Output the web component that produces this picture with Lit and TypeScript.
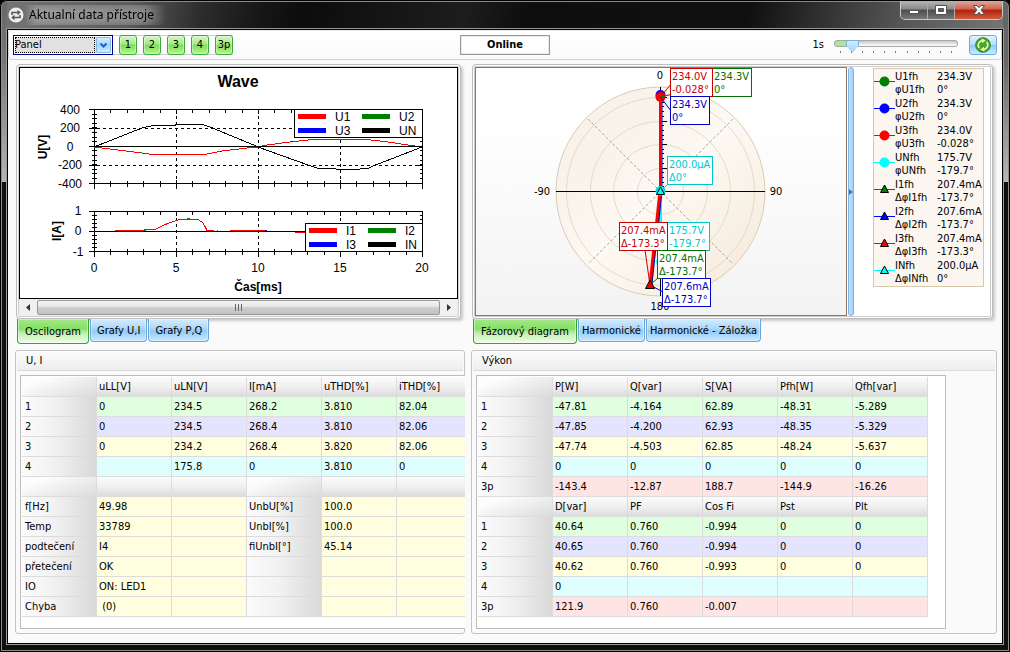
import { LitElement, html, svg, css } from "lit";
import { customElement, state } from "lit/decorators.js";
import { classMap } from "lit/directives/class-map.js";

const UI_FONT = css`"DejaVu Sans Condensed", "Noto Sans", sans-serif`;

type Row = { head: string; tone: string; cells: string[] };

const UI_ROWS: Row[] = [
  { head: "1", tone: "green", cells: ["0", "234.5", "268.2", "3.810", "82.04"] },
  { head: "2", tone: "violet", cells: ["0", "234.5", "268.4", "3.810", "82.06"] },
  { head: "3", tone: "yellow", cells: ["0", "234.2", "268.4", "3.820", "82.06"] },
  { head: "4", tone: "cyan", cells: ["", "175.8", "0", "3.810", "0"] },
];

const STATUS_ROWS: string[][] = [
  ["f[Hz]", "49.98", "UnbU[%]", "100.0"],
  ["Temp", "33789", "UnbI[%]", "100.0"],
  ["podtečení", "I4", "fiUnbI[°]", "45.14"],
  ["přetečení", "OK", "", ""],
  ["IO", "ON: LED1", "", ""],
  ["Chyba", " (0)", "", ""],
];

const POWER_BLOCKS: { heads: string[]; rows: Row[] }[] = [
  {
    heads: ["P[W]", "Q[var]", "S[VA]", "Pfh[W]", "Qfh[var]"],
    rows: [
      { head: "1", tone: "green", cells: ["-47.81", "-4.164", "62.89", "-48.31", "-5.289"] },
      { head: "2", tone: "violet", cells: ["-47.85", "-4.200", "62.93", "-48.35", "-5.329"] },
      { head: "3", tone: "yellow", cells: ["-47.74", "-4.503", "62.85", "-48.24", "-5.637"] },
      { head: "4", tone: "cyan", cells: ["0", "0", "0", "0", "0"] },
      { head: "3p", tone: "pink", cells: ["-143.4", "-12.87", "188.7", "-144.9", "-16.26"] },
    ],
  },
  {
    heads: ["D[var]", "PF", "Cos Fi", "Pst", "Plt"],
    rows: [
      { head: "1", tone: "green", cells: ["40.64", "0.760", "-0.994", "0", "0"] },
      { head: "2", tone: "violet", cells: ["40.65", "0.760", "-0.994", "0", "0"] },
      { head: "3", tone: "yellow", cells: ["40.62", "0.760", "-0.993", "0", "0"] },
      { head: "4", tone: "cyan", cells: ["0", "", "", "", ""] },
      { head: "3p", tone: "pink", cells: ["121.9", "0.760", "-0.007", "", ""] },
    ],
  },
];

@customElement("wave-chart")
class WaveChart extends LitElement {
  static styles = css`
    :host { display: block; }
    svg { display: block; width: 100%; height: auto; background: #fff; }
    text { font: 12px "Liberation Sans", Arial, sans-serif; fill: #000; }
    .mid { text-anchor: middle; }
    .bold { font-weight: bold; }
    .title { font-size: 16px; font-weight: bold; text-anchor: middle; }
    .line { fill: none; stroke: #000; stroke-width: 1; shape-rendering: crispEdges; }
    .dash { stroke-dasharray: 3 3; }
    .red { stroke: #f00; }
    .box { fill: #fff; }
  `;

  private axes(top: number, bottom: number, majors: number[], minorStep: number) {
    let d = `M94.5 ${top}H422.5V${bottom}H94.5Z`;
    for (let i = 0; i <= 20; i++) {
      const x = Math.round(94 + i * 16.4) + 0.5;
      const major = i % 5 === 0;
      d += `M${x} ${top}v${major ? 4 : 3}M${x} ${bottom + (major ? 5 : 3)}v${major ? -9 : -6}`;
    }
    for (let y = top; y < bottom - 1; y += minorStep) {
      d += `M92 ${Math.floor(y) + 0.5}h5M420 ${Math.floor(y) + 0.5}h3`;
    }
    for (const y of majors) d += `M89 ${y}h8M418 ${y}h4`;
    return svg`
      <path class="line" d=${d}></path>
      <path class="line dash" d=${`M176.5 ${top}V${bottom}M258.5 ${top}V${bottom}M340.5 ${top}V${bottom}`}></path>`;
  }

  private legend(x: number, y: number, second: number, names: string[]) {
    const fills = ["#f00", "#008000", "#00f", "#000"];
    return svg`
      <rect class="line box" x=${x + 0.5} y=${y + 0.5} width=${422 - x} height="28"></rect>
      ${names.map((n, i) => {
        const sx = x + 4 + (i % 2) * second;
        const sy = y + 5 + (i > 1 ? 14 : 0);
        return svg`<rect x=${sx} y=${sy} width="28" height="5" fill=${fills[i]}></rect>
          <text x=${sx + 37} y=${sy + 7}>${n}</text>`;
      })}`;
  }

  render() {
    return html`
      <svg viewBox="20 68 437 230" role="img" aria-label="Wave">
        <text class="title" x="238" y="87">Wave</text>
        ${this.axes(109.5, 183.5, [109.5, 128.5, 146.5, 165.5, 183.5], 4.6)}
        <path class="line dash" d="M97 128.5H420M97 165.5H420"></path>
        <polyline class="line red" points="94,147 115,149.6 140,152.7 153,154.5 205,154.5 222,151 250,147.7 258,147 265,145.3 290,142 313,139.5 367,139.5 383,141.3 415,146 422,147"></polyline>
        <path class="line" d="M94 146.5H422"></path>
        <polyline class="line" points="94,147 143,127.6 153,125.5 173,125.5 178,124.5 202,124.5 210,127 250,143.5 262,148.5 308,165 318,168.5 353,169.5 368,168.5 373,166 422,147"></polyline>
        <path stroke="#008000" d="M139 152.5h2"></path>
        <path stroke="#00f" d="M220 151.5h2M291 141.5h2"></path>
        ${this.legend(294, 109, 64, ["U1", "U2", "U3", "UN"])}
        ${["400", "200", "0", "-200", "-400"].map(
          (t, i) => svg`<text class="mid" x="70" y=${[114, 132, 151, 169, 188][i]}>${t}</text>`
        )}
        <text class="mid bold" transform="translate(47 147) rotate(-90)">U[V]</text>

        ${this.axes(211.5, 251.5, [211.5, 231.5, 251.5], 4)}
        <path class="line" d="M94 231.5H422"></path>
        <polyline class="line red" points="115,230.5 144,230.5 145,229.5 155,229.5 163,225.3 173,221.7 178,220 187,219.5 198,219.5 203,222.7 207,230.5 214,230.5"></polyline>
        <path class="line red" d="M230 230.5H265M295 232.5h11"></path>
        <path stroke="#008000" d="M187 218.5h3M144 230.5h2M217 230.5h1"></path>
        <path stroke="#00f" d="M265 230.5h2"></path>
        ${this.legend(305, 223, 59, ["I1", "I2", "I3", "IN"])}
        ${["1", "0", "-1"].map(
          (t, i) => svg`<text class="mid" x="78" y=${[215, 235, 256][i]}>${t}</text>`
        )}
        <text class="mid bold" transform="translate(61 231) rotate(-90)">I[A]</text>
        ${[0, 5, 10, 15, 20].map(
          (t, i) => svg`<text class="mid" x=${94 + i * 82} y="272">${t}</text>`
        )}
        <text class="mid bold" x="258" y="291">Čas[ms]</text>
      </svg>
    `;
  }
}

@customElement("phasor-chart")
class PhasorChart extends LitElement {
  static styles = css`
    :host { display: block; }
    svg { display: block; width: 100%; height: auto; }
    text { font: 11px ${UI_FONT}; fill: #000; }
    .mid { text-anchor: middle; }
    .ring { fill: none; stroke: #e6dac8; stroke-width: 1; }
    .axis { stroke: #000; stroke-width: 1; shape-rendering: crispEdges; }
    .diag { stroke: #a8a8a8; stroke-dasharray: 3 2; fill: none; }
    .box { fill: #fff; shape-rendering: crispEdges; }
  `;

  private tag(x: number, y: number, w: number, color: string, a: string, b: string) {
    return svg`
      <rect class="box" x=${x + 0.5} y=${y + 0.5} width=${w - 1} height="28" stroke=${color}></rect>
      <text x=${x + 2} y=${y + 12} style="fill:${color}">${a}</text>
      <text x=${x + 2} y=${y + 25} style="fill:${color}">${b}</text>`;
  }

  render() {
    let ticks = "";
    for (let i = 1; i <= 21; i++) {
      const y = Math.round(191 - i * 4.7) + 0.5;
      ticks += `M661 ${y}h${i % 5 === 0 ? 6 : 3}`;
    }
    return html`
      <svg viewBox="476 68 370 247" role="img" aria-label="Fázorový diagram">
        <defs>
          <linearGradient id="bg" x1="0" y1="0" x2="0" y2="1">
            <stop offset="0.2" stop-color="#fff"></stop>
            <stop offset="1" stop-color="#f3f3f3"></stop>
          </linearGradient>
          <linearGradient id="disc" x1="0" y1="0" x2="1" y2="1">
            <stop offset="0" stop-color="#faf1e8"></stop>
            <stop offset="0.3" stop-color="#f9f3eb"></stop>
            <stop offset="0.5" stop-color="#fdf9f3"></stop>
            <stop offset="1" stop-color="#f3e8d7"></stop>
          </linearGradient>
        </defs>
        <rect x="476" y="68" width="370" height="247" fill="url(#bg)"></rect>
        <circle cx="660.5" cy="191.5" r="104.5" fill="url(#disc)" stroke="#d9ccb5"></circle>
        ${[94, 70, 47, 23].map((r) => svg`<circle class="ring" cx="660.5" cy="191.5" r=${r}></circle>`)}
        <path class="diag" d="M588 119L733 264M733 119L588 264"></path>
        <path class="axis" d="M556 191.5H765M660.5 87V296"></path>
        <path class="axis" d=${ticks}></path>
        <text class="mid" x="660" y="79">0</text>
        <text class="mid" x="542" y="195">-90</text>
        <text class="mid" x="776" y="195">90</text>
        <text class="mid" x="660" y="310">180</text>

        <path d="M660.5 191V262" stroke="#0ff" stroke-width="3"></path>
        <circle cx="661" cy="262" r="5" fill="#0ff"></circle>
        <circle cx="660.5" cy="95" r="5" fill="#00f"></circle>
        <path d="M661 191V97" stroke="#00c" stroke-width="3"></path>
        <path d="M660.500 191V97" stroke="#f00" stroke-width="3"></path>
        <path d="M661 191L651 284" stroke="#00a" stroke-width="3"></path>
        <path d="M660 191L650 285" stroke="#f00" stroke-width="3"></path>
        <circle cx="660.5" cy="97" r="5" fill="#f00"></circle>
        <path d="M671 84L660.5 97" stroke="#d00"></path>
        <path d="M671 94.5L660.5 97" stroke="#007000"></path>
        <path d="M671 111L660.5 97" stroke="#00c"></path>
        <path d="M668 184L661 191" stroke="#0cc"></path>
        <path d="M645 250L650 285" stroke="#c00"></path>
        <path d="M658 278L650 285" stroke="#007000"></path>
        <path d="M663 292L650 285" stroke="#00c"></path>
        <path d="M645.5 288.5h9L650 280Z" fill="#e00" stroke="#000"></path>
        <circle cx="660.5" cy="191" r="5" fill="#0dd"></circle>
        <path d="M656.5 194.5h8L660.5 187Z" fill="#0ff" stroke="#000"></path>

        ${this.tag(712, 68, 40, "#007000", "234.3V", "0°")}
        ${this.tag(670, 68, 43, "#c80000", "234.0V", "-0.028°")}
        ${this.tag(670, 96, 40, "#0000c8", "234.3V", "0°")}
        ${this.tag(667, 156, 46, "#00c8c8", "200.0µA", "Δ0°")}
        ${this.tag(667, 222, 43, "#00c8c8", "175.7V", "-179.7°")}
        ${this.tag(619, 222, 49, "#c80000", "207.4mA", "Δ-173.3°")}
        ${this.tag(657, 250, 49, "#007000", "207.4mA", "Δ-173.7°")}
        ${this.tag(662, 278, 49, "#0000c8", "207.6mA", "Δ-173.7°")}
      </svg>
    `;
  }
}

@customElement("phasor-legend")
class PhasorLegend extends LitElement {
  static styles = css`
    :host { display: block; font: 11px/13px ${UI_FONT}; color: #000; }
    .list {
      list-style: none; margin: 0; padding: 0 0 1px;
      border: 1px solid #d8c7aa; background: #fbf6f0; white-space: nowrap;
    }
    .item { display: grid; grid-template-columns: 21px 42px 1fr; height: 27px; }
    .mark { display: block; width: 21px; height: 27px; }
    .cell { padding-top: 1px; }
  `;
  private items: [string, string, string, string, string, boolean][] = [
    ["U1fh", "φU1fh", "234.3V", "0°", "#008000", false],
    ["U2fh", "φU2fh", "234.3V", "0°", "#0000ff", false],
    ["U3fh", "φU3fh", "234.0V", "-0.028°", "#ff0000", false],
    ["UNfh", "φUNfh", "175.7V", "-179.7°", "#00ffff", false],
    ["I1fh", "ΔφI1fh", "207.4mA", "-173.7°", "#008000", true],
    ["I2fh", "ΔφI2fh", "207.6mA", "-173.7°", "#0000ff", true],
    ["I3fh", "ΔφI3fh", "207.4mA", "-173.3°", "#ff0000", true],
    ["INfh", "ΔφINfh", "200.0µA", "0°", "#00ffff", true],
  ];
  render() {
    return html`<ul class="list">
      ${this.items.map(
        ([n, p, v, a, c, tri]) => html`<li class="item">
          <svg class="mark" viewBox="0 0 21 27" aria-hidden="true">
            <path d="M0 12.5H21" stroke=${c}></path>
            ${tri
              ? svg`<path d="M6.500 15.500h8L10.500 8Z" fill=${c} stroke="#000"></path>`
              : svg`<circle cx="10.5" cy="12.5" r="5" fill=${c}></circle>`}
          </svg>
          <span class="cell">${n}<br />${p}</span>
          <span class="cell">${v}<br />${a}</span>
        </li>`
      )}
    </ul>`;
  }
}

@customElement("app-root")
class AppRoot extends LitElement {
  @state() private leftTab = 0;
  @state() private rightTab = 0;

  static styles = css`
    :host { display: block; font: 11px/14px ${UI_FONT}; color: #000; background: #000; }
    * { box-sizing: border-box; }
    .window {
      min-height: 100vh; padding: 0 7px 8px; display: flex; flex-direction: column;
      border-radius: 7px 7px 0 0; box-shadow: inset 0 0 0 1px #000, inset 0 0 0 2px #8a8a8a;
      background:
        linear-gradient(#666, #777 60px, #b4b4b4 182px, transparent 182px) left / 7px 100% no-repeat,
        linear-gradient(#666, #666 60px, #b8b8b8 182px, transparent 182px) right / 7px 100% no-repeat,
        linear-gradient(100deg, #757575, #5c5c5c 130px, #2c2c2c 200px, #161616 260px, #0c0c0c 300px, #1d1d1d 460px, #0e0e0e 520px, #101010 740px, #555 890px, #777) top / 100% 29px no-repeat,
        #101010;
    }
    .titlebar { display: flex; height: 29px; align-items: flex-start; }
    .appicon { width: 16px; height: 16px; margin: 7px 0 0 1px; }
    .title {
      margin: 5px 0 0; padding: 0 12px 0 5px; font: 12px/20px "Noto Sans", "Open Sans", sans-serif; color: #000;
      background: linear-gradient(90deg, transparent, rgba(165, 165, 165, 0.8) 12px, rgba(150, 150, 150, 0.8) 85%, transparent);
      -webkit-mask-image: linear-gradient(rgba(0, 0, 0, 0.6), #000 30%, #000 70%, rgba(0, 0, 0, 0.6));
    }
    .caption { margin: 1px 0 0 auto; display: flex; border: 1px solid #c8c8c8; border-top: 0; border-radius: 0 0 5px 5px; overflow: hidden; }
    .capbtn {
      width: 27px; height: 18px; padding: 0; border: 0; border-right: 1px solid #aaa; display: grid; place-items: center;
      background: linear-gradient(#b5b5b5, #8a8a8a 45%, #4c4c4c 50%, #777);
    }
    .capbtn.close { width: 47px; border-right: 0; background: linear-gradient(#e0a79b, #cd6450 45%, #b2220b 50%, #d25a3a); }
    .client {
      flex: 1; border: 1px solid #000; box-shadow: 0 0 0 1px #9a9a9a; background: #fafafa;
      display: flex; flex-direction: column;
    }
    .toolbar {
      display: grid; grid-template-columns: 1fr auto 1fr; align-items: center; height: 30px; padding: 0 4px;
      border: 1px solid #d2d2d2; border-top-color: #eee; border-radius: 4px; background: linear-gradient(#fff, #fafafa);
    }
    .tools { display: flex; align-items: center; }
    .combo { display: grid; width: 100px; height: 20px; }
    .combo > * { grid-area: 1 / 1; }
    .combo select {
      appearance: none; border: 1px solid #00008b; border-radius: 0; padding: 0 18px 0 1px; font: inherit; color: #000;
      background: #e1e1e1; box-shadow: inset 0 0 0 1px #fff; margin: 0; outline: 0;
    }
    .focus { border: 1px dotted #000; margin: 2px 18px 2px 2px; pointer-events: none; }
    .arrow {
      justify-self: end; align-self: center; width: 15px; height: 16px; margin-right: 2px; pointer-events: none;
      border: 1px solid #7fb8ea; border-radius: 2px; background: linear-gradient(#d8eefe, #a4d4fb 50%, #d0ecff);
    }
    .phases { display: flex; gap: 6px; padding-left: 6px; background: linear-gradient(#ccc, #ccc) top / 100% 1px no-repeat, linear-gradient(#ccc, #ccc) bottom / 100% 1px no-repeat; }
    .phase {
      width: 18px; height: 20px; padding: 0; border: 1px solid #3ca83c; border-radius: 3px; font: inherit; color: #000;
      background: linear-gradient(#d6f7c4, #a4e985 45%, #7edb58 50%, #b6f392); box-shadow: inset 0 0 0 1px rgba(255, 255, 255, 0.4);
    }
    .online { width: 90px; height: 20px; border: 1px solid #999; box-shadow: inset 0 0 0 1px #e8e8e8; background: #fff; padding: 0; font: bold 11px/16px ${UI_FONT}; text-align: center; color: #000; }
    .right { justify-content: flex-end; }
    .rate { margin-right: 10px; }
    .slider { width: 124px; height: 20px; margin-right: 11px; display: flex; flex-direction: column; }
    .slider input { appearance: none; width: 100%; height: 16px; margin: 0; background: none; flex: none; }
    .slider input::-webkit-slider-runnable-track {
      height: 7px; border: 1px solid #a6a6a6; border-radius: 3px;
      background: linear-gradient(#a9e88b, #a9e88b) left / 12px 100% no-repeat, linear-gradient(#c8c8c8, #fff);
    }
    .slider input::-webkit-slider-thumb {
      appearance: none; width: 13px; height: 13px; margin-top: -1px;
      background: linear-gradient(#d4edff, #9fd2fa); border: 1px solid #79b1e4; border-radius: 2px;
      clip-path: polygon(0 0, 100% 0, 100% 50%, 50% 100%, 0 50%);
    }
    .ticks { display: flex; justify-content: space-between; padding: 0 6px; }
    .ticks i { width: 1px; height: 2px; background: #777; }
    .refresh {
      width: 28px; height: 20px; padding: 0; border: 1px solid #6fa9e0; border-radius: 3px; display: grid; place-items: center;
      background: linear-gradient(#e3f3ff, #b4dcfb 50%, #8ccbfa 52%, #c9edff);
    }
    .main { flex: 1; display: grid; grid-template-columns: 450fr 526fr; gap: 0 6px; padding: 4px 5px 9px 7px; align-content: start; }
    .col { min-width: 0; }
    .panel {
      margin: 0 4px 0 1px; padding: 2px; border: 1px solid #bcbcbc; border-radius: 4px; background: #fff;
      box-shadow: inset 0 0 0 1px #fff, inset 0 0 0 2px #ccc, 2px 2px 3px rgba(0, 0, 0, 0.2);
    }
    .plot { border: 1px solid #000; }
    .scroll { height: 17px; display: flex; align-items: center; background: #f0f0f0; }
    .sbtn { width: 18px; height: 17px; padding: 0; border: 0; background: none; display: grid; place-items: center; }
    .thumb {
      flex: 1; height: 15px; border: 1px solid #989898; border-radius: 2px; display: grid; place-items: center;
      background: linear-gradient(#f5f5f5, #e6e6e6 45%, #cfcfd2 50%, #c2c2c6);
    }
    .split { display: flex; }
    .phasor { flex: 1; min-width: 0; border: 1px solid #8a7768; }
    .splitter { width: 6px; margin: 0 19px 0 1px; border: 1px solid #7ab3ea; border-radius: 3px; background: linear-gradient(90deg, #c8e6fd, #9ccffa); display: grid; place-items: center; }
    .legend { width: 111px; margin: 1px 6px 0 0; }
    .tabs { display: flex; align-items: flex-start; height: 31px; padding: 0 2px; gap: 1px; }
    .tab {
      height: 23px; padding: 1px 6px 0; border: 1px solid #6ba5dd; border-top: 0; border-radius: 0 0 4px 4px; font: inherit; color: #000;
      background: linear-gradient(#d5ebfd, #b0d9fb 40%, #92cbf9 55%, #c9e8fe); white-space: nowrap; box-shadow: inset 0 0 0 1px rgba(255, 255, 255, 0.4);
    }
    .tab.active { height: 25px; padding: 1px 7px 0; border-color: #36a336; background: linear-gradient(#a5e88a, #86df66 40%, #c2f0ae 60%, #f0fdea); }
    .tight .tab:not(.active) { padding: 1px 3px 0; }
    .group { border: 1px solid #c4c4c4; border-radius: 3px; padding-bottom: 4px; background: #fafafa; }
    .ghead { margin: 0 1px 4px; height: 20px; padding-left: 9px; font: inherit; line-height: 19px; border-bottom: 1px solid #dcdcdc; background: linear-gradient(#fcfcfc, #ededed); }
    .tablebox { margin-left: 4px; padding: 1px 0 11px 1px; border: 1px solid #bbb; background: #fff; overflow: hidden; }
    .clipped { margin-right: -1px; border-right: 0; }
    .wide { width: 470px; }
    table { width: 450px; table-layout: fixed; border-collapse: separate; border-spacing: 0; }
    th, td { height: 20px; padding: 0 0 0 2px; border: solid #dcdcdc; border-width: 0 1px 1px 0; text-align: left; font-weight: normal; white-space: pre; line-height: 16px; }
    th { background: linear-gradient(#fbfbfb, #f0f0f0 50%, #dcdcdc); }
    th.corner { background: linear-gradient(160deg, #fdfdfd 20%, #dcdcdc); }
    th.row { padding-left: 3px; background: linear-gradient(90deg, #fbfbfb, #f1f1f1 45%, #d9d9d9); }
    th.mid { padding-left: 2px; }
    .green { background: #dfffdf; }
    .violet { background: #e4e4ff; }
    .yellow { background: #ffffdf; }
    .cyan { background: #dfffff; }
    .pink { background: #ffe4e4; }
  `;

  private tabs(names: string[], active: number, tight: boolean, pick: (i: number) => void) {
    return html`<div class=${classMap({ tabs: true, tight })} role="tablist">
      ${names.map(
        (n, i) => html`<button role="tab" aria-selected=${i === active} class=${classMap({ tab: true, active: i === active })} @click=${() => pick(i)}>${n}</button>`
      )}
    </div>`;
  }

  private headRow(heads: string[]) {
    return html`<tr><th class="corner"></th>${heads.map((h) => html`<th scope="col">${h}</th>`)}</tr>`;
  }

  private dataRow(r: Row) {
    return html`<tr><th scope="row" class="row">${r.head}</th>${r.cells.map((c) => html`<td class=${r.tone}>${c}</td>`)}</tr>`;
  }

  render() {
    return html`
      <div class="window">
        <header class="titlebar">
          <svg class="appicon" viewBox="0 0 16 16" aria-hidden="true">
            <circle cx="8" cy="8" r="7.5" fill="#eee"></circle>
            <path d="M4 8V5.500h6M12 8V10.500H6" fill="none" stroke="#555" stroke-width="1.600"></path>
            <path d="M9.500 2.700L12.700 5.500L9.500 8.200ZM6.500 7.800L3.300 10.500l3.200 2.800Z" fill="#555"></path>
          </svg>
          <span class="title">Aktualní data přístroje</span>
          <div class="caption">
            <button class="capbtn" aria-label="Minimalizovat">
              <svg width="12" height="12" viewBox="0 0 12 12"><rect x="1.500" y="6.500" width="9" height="3" fill="#fff" stroke="#555"></rect></svg>
            </button>
            <button class="capbtn" aria-label="Maximalizovat">
              <svg width="12" height="12" viewBox="0 0 12 12"><path d="M0.500 1.500h11v9h-11zM3.500 4.500h5v3h-5z" fill="#fff" fill-rule="evenodd" stroke="#555"></path></svg>
            </button>
            <button class="capbtn close" aria-label="Zavřít">
              <svg width="14" height="12" viewBox="0 0 14 12"><path d="M1.500 1.500h3.500l2 2.300 2-2.300h3.500L9 6l3.500 4.500H9L7 8.200 5 10.500H1.500L5 6Z" fill="#fff" stroke="#555"></path></svg>
            </button>
          </div>
        </header>
        <div class="client">
          <div class="toolbar">
            <div class="tools">
              <div class="combo">
                <select aria-label="Panel"><option>Panel</option></select>
                <span class="focus"></span>
                <svg class="arrow" viewBox="0 0 13 14" aria-hidden="true"><path d="M3.500 5.500l3 3 3-3" fill="none" stroke="#1d64b8" stroke-width="2"></path></svg>
              </div>
              <div class="phases">${["1", "2", "3", "4", "3p"].map((p) => html`<button class="phase">${p}</button>`)}</div>
            </div>
            <button class="online">Online</button>
            <div class="tools right">
              <label class="rate" for="rate">1s</label>
              <div class="slider">
                <input id="rate" type="range" min="0" max="10" value="1" />
                <div class="ticks">${Array.from({ length: 11 }, () => html`<i></i>`)}</div>
              </div>
              <button class="refresh" aria-label="Obnovit">
                <svg width="16" height="16" viewBox="0 0 16 16">
                  <circle cx="8" cy="8" r="7.300" fill="#42a832" stroke="#2b7d20"></circle>
                  <path d="M4.200 11A4.600 4.600 0 0 1 7 3.600" fill="none" stroke="#eef5a8" stroke-width="1.800"></path>
                  <path d="M11.800 5A4.600 4.600 0 0 1 9 12.400" fill="none" stroke="#eef5a8" stroke-width="1.800"></path>
                  <path d="M6.500 1.200L10.800 3.500L7 6.300ZM9.500 14.800L5.200 12.500L9 9.700Z" fill="#eef5a8"></path>
                </svg>
              </button>
            </div>
          </div>

          <main class="main">
            <section class="col">
              <div class="panel">
                <div class="plot"><wave-chart></wave-chart></div>
                <div class="scroll">
                  <button class="sbtn" aria-label="Vlevo"><svg width="4" height="7" viewBox="0 0 4 7"><path d="M4 0v7L0 3.500Z" fill="#333"></path></svg></button>
                  <div class="thumb"><svg width="9" height="7" viewBox="0 0 9 7"><path d="M1.500 0v7M4.500 0v7M7.500 0v7" stroke="#666"></path></svg></div>
                  <button class="sbtn" aria-label="Vpravo"><svg width="4" height="7" viewBox="0 0 4 7"><path d="M0 0v7l4-3.500Z" fill="#333"></path></svg></button>
                </div>
              </div>
              ${this.tabs(["Oscilogram", "Grafy U,I", "Grafy P,Q"], this.leftTab, false, (i) => (this.leftTab = i))}
              <div class="group">
                <h2 class="ghead">U, I</h2>
                <div class="tablebox clipped">
                  <table aria-label="U, I">
                    ${this.headRow(["uLL[V]", "uLN[V]", "I[mA]", "uTHD[%]", "iTHD[%]"])}
                    ${UI_ROWS.map((r) => this.dataRow(r))}
                    <tr><th class="corner"></th><th></th><th></th><th class="corner"></th><th></th><th></th></tr>
                    ${STATUS_ROWS.map(
                      ([a, b, c, d]) => html`<tr>
                        <th scope="row" class="row">${a}</th><td class="yellow">${b}</td><td class="yellow"></td>
                        <th scope="row" class="row mid">${c}</th><td class="yellow">${d}</td><td class="yellow"></td>
                      </tr>`
                    )}
                  </table>
                </div>
              </div>
            </section>

            <section class="col">
              <div class="panel">
                <div class="split">
                  <div class="phasor"><phasor-chart></phasor-chart></div>
                  <div class="splitter"><svg width="4" height="6" viewBox="0 0 4 6"><path d="M0 0l4 3-4 3Z" fill="#3a7cc4"></path></svg></div>
                  <div class="legend"><phasor-legend></phasor-legend></div>
                </div>
              </div>
              ${this.tabs(["Fázorový diagram", "Harmonické", "Harmonické - Záložka"], this.rightTab, true, (i) => (this.rightTab = i))}
              <div class="group">
                <h2 class="ghead">Výkon</h2>
                <div class="tablebox wide">
                  <table aria-label="Výkon">
                    ${POWER_BLOCKS.map((b) => html`${this.headRow(b.heads)}${b.rows.map((r) => this.dataRow(r))}`)}
                  </table>
                </div>
              </div>
            </section>
          </main>
        </div>
      </div>
    `;
  }
}
